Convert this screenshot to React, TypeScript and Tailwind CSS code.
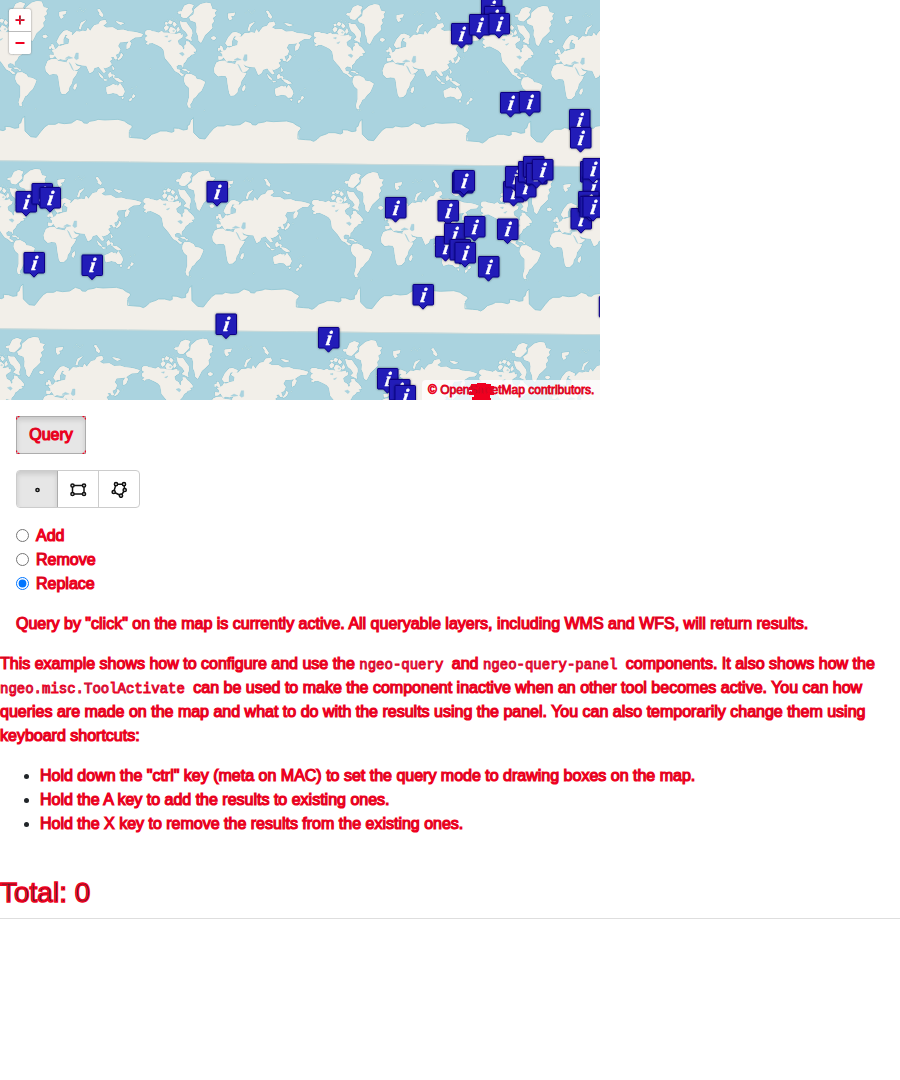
import React from "react";

type Point = [number, number];

const landPaths = [
  // North and Central America
  "M136 95L141 91L151 91L157 94L166 95L176 98L185 93L191 98L203 98L216 101L229 102L241 99L243 106L248 103L247 112L240 116L233 122L236 133L246 139L250 149L254 145L253 137L259 132L258 124L267 125L271 132L278 137L287 148L288 154L279 155L284 161L273 164L270 169L262 174L257 184L250 191L249 203L246 196L236 194L229 199L231 208L241 210L238 216L246 221L252 225L245 227L235 218L225 213L218 203L212 194L205 186L195 174L193 161L191 150L184 142L173 136L158 129L147 130L145 134L137 130L145 126L136 120L137 112L144 108L136 103Z",
  // South America
  "M253 232L258 223L272 222L286 229L290 237L303 239L315 246L311 257L304 272L295 280L287 291L281 294L275 307L270 314L272 323L265 322L262 312L267 293L267 263L257 254L252 242Z",
  // Greenland
  "M268 52L281 43L283 28L301 13L318 8L331 10L337 27L350 30L344 38L347 47L338 54L342 64L335 73L337 84L326 95L315 105L307 121L303 128L296 122L294 107L289 96L290 81L287 67L271 61Z",
  // Arctic archipelago
  "M244 50L242 39L247 30L253 17L267 11L281 16L275 27L278 35L267 47L259 54L250 53ZM235 35L244 34L240 42L233 39ZM192 83L199 76L206 80L204 87L197 92ZM206 91L212 81L222 85L229 92L224 100L211 100ZM240 64L248 67L259 67L267 79L276 91L277 101L273 113L275 123L265 118L256 114L264 106L257 95L248 88L243 77ZM209 61L218 65L213 73L204 69ZM222 65L230 73L224 80L218 73ZM235 80L239 90L232 96L230 88ZM195 68L201 66L203 72L197 74Z",
  // Africa
  "M349 188L360 183L375 182L381 188L393 190L404 192L413 193L421 211L427 218L439 219L434 229L424 243L421 256L414 266L412 277L403 286L392 287L388 280L385 264L383 251L381 235L377 228L365 227L354 229L344 219L342 206Z",
  // Eurasia
  "M365 178L356 179L355 169L368 170L367 162L361 157L377 150L382 142L388 143L399 139L412 136L414 123L403 116L410 109L402 109L396 123L396 137L388 137L383 139L376 130L385 112L397 98L407 96L423 103L421 109L409 111L424 110L435 99L445 100L454 97L465 99L469 88L477 98L480 92L489 81L501 78L507 68L522 65L526 74L515 82L526 88L544 87L558 95L577 94L591 99L611 101L623 104L635 108L629 116L612 117L602 123L594 129L600 134L594 148L586 152L586 139L593 129L580 131L566 132L560 143L567 153L562 165L553 169L558 182L551 183L547 175L538 177L543 183L535 188L541 198L533 205L521 210L515 207L523 221L517 223L507 212L502 205L489 209L485 219L475 225L465 202L451 201L439 198L429 191L436 202L448 205L440 213L424 219L414 200L406 190L412 181L398 184L383 181L381 170L388 181L380 185L371 172Z",
  // Australia and New Zealand
  "M525 267L537 262L546 257L551 260L558 259L558 266L566 255L577 271L580 280L574 292L564 293L557 286L545 284L529 288L526 280ZM571 297L577 297L574 303ZM606 288L612 292L606 299L602 297ZM595 302L602 299L600 306L594 309Z",
  // Smaller islands
  "M429 260L435 255L436 264L431 274L426 270ZM334 112L342 109L349 114L342 120L335 117ZM361 137L366 139L371 153L364 153L360 146ZM354 145L360 144L359 151L354 152ZM384 41L405 38L402 47L392 49L397 56L389 61L384 52ZM443 91L449 73L464 66L451 81L448 93ZM498 34L504 32L516 50L513 56L504 49L505 44ZM553 69L565 71L578 75L568 79L560 75ZM560 182L567 173L569 164L575 170L569 180L560 186ZM531 228L537 221L543 232L533 238ZM501 222L515 236L516 241L507 235ZM517 242L529 245L520 247ZM543 228L550 231L547 240ZM548 238L561 240L575 250L565 252L554 245ZM543 202L549 211L545 216ZM246 208L258 208L263 213L251 211ZM261 214L269 214L266 218Z",
];
const antarcticCoast =
  "M88 395L88 412L110 414L125 415L135 419L145 413L155 403L173 397L180 393L199 393L215 397L222 394L221 384L236 385L250 390L262 388L262 377L268 374L272 361L280 353L281 398L298 415L315 417L328 400L341 385L352 378L372 378L381 373L399 376L420 374L437 363L453 368L457 374L468 375L475 369L493 366L500 363L520 365L560 363L579 368L590 376L601 381L603 386L594 397";

const lakes =
  "M429 179L434 164L441 164L441 181L435 184ZM402 180L412 174L424 179L413 181ZM238 160L247 157L253 162L248 168ZM194 109L203 107L202 112ZM204 124L214 120L209 126ZM413 192L418 197L427 217L422 211Z";
const dots: Point[] = [
  [435, 38], [443, 30], [448, 36], [460, 32], [453, 39], [215, 56], [227, 59],
  [218, 92], [231, 66], [199, 61], [267, 326], [273, 325], [148, 205],
  [93, 265], [106, 260], [310, 331], [463, 316], [536, 215], [581, 166],
];

const markers: Point[] = [
  [481, -3], [484, 6], [451, 23], [469, 14], [488.5, 13],
  [500, 92], [519, 91], [569, 109], [570, 127],
  [503, 181], [505, 166], [515, 176], [518, 161], [523, 156], [526, 163], [532, 159],
  [452, 172], [453.5, 170], [385, 197], [435, 236], [437.5, 200], [444, 223],
  [464, 216], [449.5, 239], [454.5, 242], [497, 218.5], [478, 256],
  [570.5, 208], [580, 161], [582.5, 176], [582.5, 158], [578, 191], [579.5, 196], [582.5, 196],
  [15.5, 191], [31.5, 183], [39.5, 187], [23.5, 252], [81.5, 254.5], [206.5, 181],
  [215.5, 313.5], [318, 327], [412.5, 284], [377, 368], [389, 379], [394.5, 385], [598.8, 296],
];

function WorldMap() {
  const copies: Point[] = [];
  for (let row = -1; row < 3; row++) {
    for (let col = -2; col < 4; col++) copies.push([col, row]);
  }
  return (
    <svg width="600" height="400" viewBox="0 0 600 400" className="block">
      <defs>
        <g id="world">
          <path d={`${antarcticCoast}L594 400L598 416L598 490L88 485Z`} fill="#f2efe9" />
          <path d={antarcticCoast} fill="none" stroke="#8fc5d2" strokeWidth="2.5" />
          <path d="M88 486L594 491" stroke="#cbdad9" strokeWidth="3" />
          {landPaths.map((d) => (
            <path key={d} d={d} fill="#f2efe9" stroke="#88c1d0" strokeWidth="4" strokeLinejoin="round" paintOrder="stroke" />
          ))}
          {landPaths.map((d) => (
            <path key={d} d={d} fill="#f2efe9" stroke="#f2efe9" strokeWidth="1" />
          ))}
          <path d={lakes} fill="#aad3df" stroke="#9ccbd8" />
          {dots.map(([x, y]) => (
            <path key={`${x}-${y}`} d={`M${x} ${y}l4 -2l2 3l-4 2z`} fill="#c7dfe0" stroke="#94c7d4" />
          ))}
        </g>
        <g id="marker">
          <path d="M1 .5H20Q21 .5 21 1.5V20Q21 21 20 21H14.5L10.5 25.2L6.5 21H1Q.5 21 .5 20V1.5Q.5 .5 1 .5Z" fill="#201bb8" stroke="#080083" strokeWidth="1" />
          <text transform="translate(10.1 17.7) skewX(-9)" textAnchor="middle" fill="white" stroke="white" strokeWidth=".35" fontFamily="Liberation Serif, serif" fontSize="20.5" fontStyle="italic" fontWeight="700">i</text>
        </g>
        <filter id="shade" x="-50%" y="-50%" width="200%" height="200%">
          <feDropShadow dx="0" dy="0" stdDeviation="1.3" floodColor="#000" floodOpacity=".5" />
        </filter>
      </defs>
      <rect width="600" height="400" fill="#aad3df" />
      {copies.map(([col, row]) => (
        <use key={`${col}-${row}`} href="#world" transform={`translate(${100 + (506 * col - 5 * row) / 3} ${(5 * col + 504 * row) / 3}) scale(.333333)`} />
      ))}
      {markers.map(([x, y]) => (
        <use key={`${x}-${y}`} href="#marker" x={x} y={y} filter="url(#shade)" />
      ))}
    </svg>
  );
}

function DrawIcon({ points, closed = true }: { points: Point[]; closed?: boolean }) {
  return (
    <svg width="18" height="18" viewBox="0 0 18 18" fill="none" stroke="#111" strokeWidth="1.5">
      {closed && <polygon points={points.map((p) => p.join(",")).join(" ")} />}
      {points.map(([x, y]) => (
        <circle key={`${x}-${y}`} cx={x} cy={y} r="1.6" fill="#ddd" />
      ))}
    </svg>
  );
}

function Choice({ label, checked = false }: { label: string; checked?: boolean }) {
  return (
    <label className="flex h-6 items-start">
      <input type="radio" name="action" defaultChecked={checked} className="mt-[5px] mr-[7px] size-[13px] accent-[#0075ff]" />
      {label}
    </label>
  );
}

function Code({ children }: { children: string }) {
  return (
    <code className="mr-1 font-['Liberation_Mono',monospace] text-sm text-[#0275d8] [-webkit-text-stroke:0.95px_#f00020]">{children}</code>
  );
}

const pressed = "bg-[#e6e6e6] shadow-[inset_0_3px_5px_rgba(0,0,0,0.125)]";

export default function App() {
  return (
    <main className="h-[1080px] w-[900px] overflow-hidden bg-white font-['Liberation_Sans',sans-serif] text-base leading-6 text-[#292b2c] [-webkit-text-stroke:1.2px_#f00020]">
      <section className="relative h-[400px] w-[600px] overflow-hidden [-webkit-text-stroke:0]">
        <WorldMap />
        <div className="absolute top-[9px] left-[9px] flex w-[22px] flex-col gap-px rounded-[2px] bg-[#bbb] shadow-[0_0_2px_#777]">
          <button className="flex h-[22px] items-center justify-center rounded-t-[2px] bg-white" aria-label="Zoom in">
            <svg width="10" height="10" viewBox="0 0 10 10"><path d="M5 .5V9.5M.5 5H9.5" stroke="#f00020" strokeWidth="2" /><path d="M5.5 1V9M1 4.5H9" stroke="#777" strokeWidth=".5" /></svg>
          </button>
          <button className="flex h-[22px] items-center justify-center rounded-b-[2px] bg-white" aria-label="Zoom out">
            <svg width="10" height="10" viewBox="0 0 10 10"><path d="M.5 5H9.5" stroke="#f00020" strokeWidth="2" /></svg>
          </button>
        </div>
        <div className="absolute right-0 bottom-0 h-5 w-[178px] rounded-tl bg-white/75 pl-[6px] text-xs leading-5 whitespace-nowrap [-webkit-text-stroke:0.8px_#f00020]">
          <svg className="absolute top-[3px] left-[47px]" width="25" height="17" viewBox="0 0 25 17" fill="#f00020">
            <path d="M2 1H8V0H17V1H22V3H25V6H23V9H25V12H21V15H22V17H3V14H5V12H0V9H3V7H0V4H2Z" />
          </svg>
          <span className="relative">© OpenStreetMap contributors.</span>
        </div>
      </section>

      <section className="px-4 pt-4">
        <button className={`relative flex h-[38px] w-[70px] items-center justify-center border border-[#adadad] ${pressed}`}>
          Query
          <svg className="absolute -top-px -left-px" width="70" height="38" viewBox="0 0 70 38" fill="none" stroke="#f00020" strokeWidth="1.2" strokeDasharray="2 1">
            <path d="M.5 3.5Q.5 .5 3.5 .5M66.5 .5Q69.5 .5 69.5 3.5M69.5 34.5Q69.5 37.5 66.5 37.5M3.5 37.5Q.5 37.5 .5 34.5" />
          </svg>
        </button>
        <div className="mt-4 flex h-[38px] w-[124px] overflow-hidden rounded border border-[#ccc]">
          <button className={`flex w-[41px] items-center justify-center border-r border-[#adadad] ${pressed}`} aria-label="Point">
            <DrawIcon points={[[9.5, 10]]} closed={false} />
          </button>
          <button className="flex w-[41px] items-center justify-center border-r border-[#ccc]" aria-label="Rectangle">
            <DrawIcon points={[[3.5, 5.5], [15, 5.5], [15, 14], [3.5, 14]]} />
          </button>
          <button className="flex w-10 items-center justify-center" aria-label="Polygon">
            <DrawIcon points={[[6, 4.2], [14, 4.2], [14.7, 10], [11, 15.7], [3.7, 12]]} />
          </button>
        </div>
        <div className="mt-4 flex flex-col">
          <Choice label="Add" />
          <Choice label="Remove" />
          <Choice label="Replace" checked />
        </div>
        <p className="mt-4 whitespace-nowrap">Query by "click" on the map is currently active. All queryable layers, including WMS and WFS, will return results.</p>
      </section>

      <p className="mt-4 whitespace-nowrap">
        This example shows how to configure and use the <Code>ngeo-query</Code> and <Code>ngeo-query-panel</Code> components. It also shows how the<br />
        <Code>ngeo.misc.ToolActivate</Code> can be used to make the component inactive when an other tool becomes active. You can how<br />
        queries are made on the map and what to do with the results using the panel. You can also temporarily change them using<br />
        keyboard shortcuts:
      </p>
      <ul className="mt-4 list-disc pl-10 marker:text-[#212529]">
        <li>Hold down the "ctrl" key (meta on MAC) to set the query mode to drawing boxes on the map.</li>
        <li>Hold the A key to add the results to existing ones.</li>
        <li>Hold the X key to remove the results from the existing ones.</li>
      </ul>
      <h2 className="mt-10 border-b border-[#dedede] pb-2 text-[28px] leading-[34px] [-webkit-text-stroke:1.5px_#f00020]">Total: 0</h2>
    </main>
  );
}
